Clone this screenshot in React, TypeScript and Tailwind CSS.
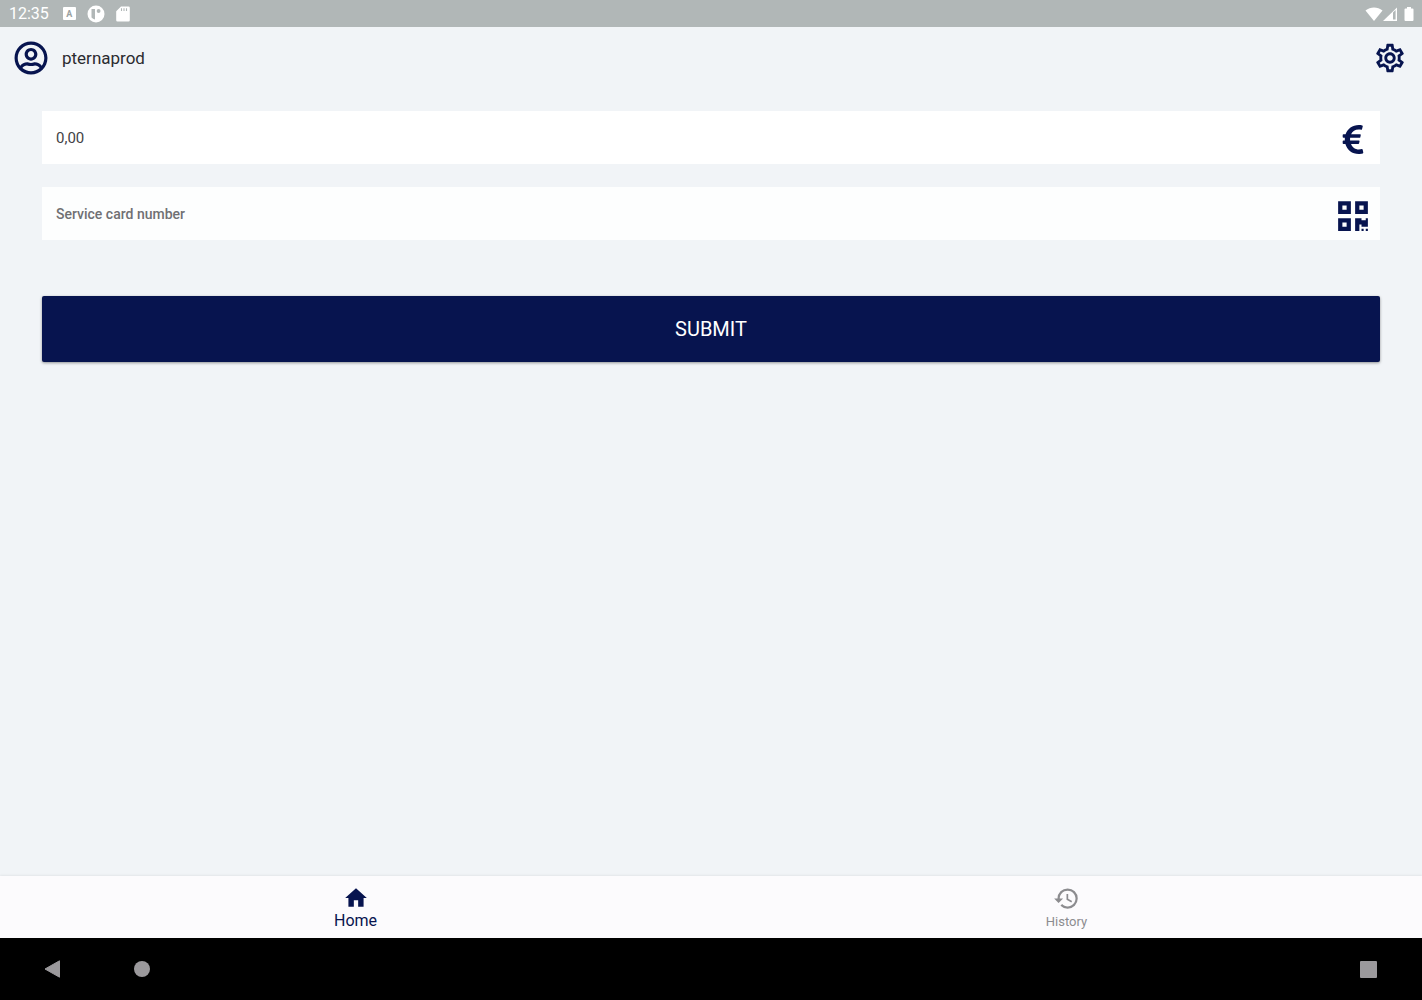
import { useState } from "react";
import type { FormEvent, ReactNode } from "react";
import { FaEuroSign, FaQrcode, FaRegUserCircle } from "react-icons/fa";
import { MdHistory, MdHome, MdOutlineSettings } from "react-icons/md";

type Tab = "home" | "history";

function StatusBar() {
  return (
    <div className="flex h-[27px] shrink-0 items-center bg-[#b1b7b7] pl-[9px] pr-2 text-white">
      <span className="text-base leading-5">12:35</span>

      {/* Notifications */}
      <div className="ml-[14px] flex items-center gap-[11px]">
        <span className="flex size-[13px] items-center justify-center rounded-[1px] bg-white text-[9px] font-bold leading-3 text-[#9aa1a1]">
          A
        </span>
        <svg viewBox="0 0 18 18" className="size-[18px]" aria-hidden="true">
          <circle cx="9" cy="9" r="8.5" fill="#fff" />
          <path d="M4.500 4h3.500v10.500a6 6 0 0 1-3.500-2z" fill="#b1b7b7" />
          <circle cx="11.600" cy="6" r="1.900" fill="#b1b7b7" />
        </svg>
        <svg viewBox="0 0 14 16" className="h-4 w-[14px]" aria-hidden="true">
          <path d="M5 0.500h7.500a1.300 1.300 0 0 1 1.300 1.300v12.400a1.300 1.300 0 0 1-1.300 1.300h-11a1.300 1.300 0 0 1-1.300-1.300V5.300z" fill="#fff" />
          <path d="M5.500 2.200v2.800M8 2.200v2.800M10.500 2.200v2.800" stroke="#b1b7b7" strokeWidth="1.100" />
        </svg>
      </div>

      {/* Wifi, signal and battery */}
      <div className="ml-auto flex items-center">
        <svg viewBox="0 0 18 14" className="h-[14px] w-[18px]" fill="#fff" aria-hidden="true">
          <path d="M9 14 0.500 3.600C3 1.500 6 0.500 9 0.500s6 1 8.500 3.100z" />
        </svg>
        <svg viewBox="0 0 14 14" className="size-[14px]" aria-hidden="true">
          <path d="M0 14 14 0.500V14z" fill="#fff" />
          <path d="M10 5.500 12.600 3v9.600H10z" fill="#b1b7b7" />
        </svg>
        <svg viewBox="0 0 10 14" className="ml-[7px] h-[14px] w-[10px]" fill="#fff" aria-hidden="true">
          <path d="M3 0h4v1.500h1.500a1 1 0 0 1 1 1V13a1 1 0 0 1-1 1h-7a1 1 0 0 1-1-1V2.500a1 1 0 0 1 1-1H3z" />
        </svg>
      </div>
    </div>
  );
}

interface TabButtonProps {
  active: boolean;
  label: string;
  icon: ReactNode;
  onClick: () => void;
}

function TabButton({ active, label, icon, onClick }: TabButtonProps) {
  return (
    <button
      type="button"
      onClick={onClick}
      aria-current={active ? "page" : undefined}
      className={
        active
          ? "flex flex-1 cursor-pointer flex-col items-center pt-[9px] text-base leading-5 text-[#07144f]"
          : "flex flex-1 cursor-pointer flex-col items-center pt-[9px] text-[13px] leading-5 text-[#8c8c8f]"
      }
    >
      {icon}
      {label}
    </button>
  );
}

export default function App() {
  const [amount, setAmount] = useState("0,00");
  const [cardNumber, setCardNumber] = useState("");
  const [tab, setTab] = useState<Tab>("home");

  const handleSubmit = (e: FormEvent) => {
    e.preventDefault();
  };

  return (
    <div className="flex min-h-screen flex-col bg-[#f1f4f7] font-['Roboto',sans-serif]">
      <StatusBar />

      <header className="flex h-[62px] shrink-0 items-center pl-[14px] pr-[15px] text-[#07144f]">
        <FaRegUserCircle className="size-[34px]" />
        <span className="ml-[14px] text-[17px] leading-6 text-[#2b2b30]">pternaprod</span>
        <button type="button" aria-label="Settings" className="ml-auto cursor-pointer">
          <MdOutlineSettings className="size-[34px]" />
        </button>
      </header>

      <main className="flex-1 px-[42px] pt-[22px]">
        <form onSubmit={handleSubmit} className="flex flex-col">
          <label className="flex h-[53px] items-center bg-white pr-3 text-[#07144f]">
            <input
              type="text"
              inputMode="decimal"
              aria-label="Amount"
              value={amount}
              onChange={(e) => setAmount(e.target.value)}
              className="h-full min-w-0 flex-1 bg-transparent px-[14px] text-[15px] text-[#424246] outline-none"
            />
            <FaEuroSign className="mt-1 h-[33px] w-[30px]" />
          </label>

          <div className="mt-[23px] flex h-[53px] items-center bg-[#fdfefe] pr-3 text-[#07144f]">
            <input
              type="text"
              aria-label="Service card number"
              placeholder="Service card number"
              value={cardNumber}
              onChange={(e) => setCardNumber(e.target.value)}
              className="h-full min-w-0 flex-1 bg-transparent px-[14px] text-[14px] font-medium text-[#424246] outline-none placeholder:text-[#707073]"
            />
            <button type="button" aria-label="Scan QR code" className="mt-1 cursor-pointer">
              <FaQrcode className="h-[34px] w-[30px]" />
            </button>
          </div>

          <button
            type="submit"
            className="mt-14 h-[66px] cursor-pointer rounded-xs bg-[#07144f] text-xl text-white shadow-[0_1px_3px_rgba(0,0,0,0.4)]"
          >
            SUBMIT
          </button>
        </form>
      </main>

      <nav className="flex h-[62px] shrink-0 bg-[#fcfbfd] shadow-[0_-1px_2px_rgba(0,0,0,0.06)]">
        <TabButton
          active={tab === "home"}
          label="Home"
          icon={<MdHome className="size-[26px]" />}
          onClick={() => setTab("home")}
        />
        <TabButton
          active={tab === "history"}
          label="History"
          icon={<MdHistory className="size-[27px]" />}
          onClick={() => setTab("history")}
        />
      </nav>

      {/* System navigation */}
      <div className="flex h-[62px] shrink-0 items-center bg-black pl-11 pr-[45px] text-[#9b999c]">
        <button type="button" aria-label="Back" className="cursor-pointer">
          <svg viewBox="0 0 17 18" className="h-[18px] w-[17px]" fill="currentColor" stroke="currentColor" strokeLinejoin="round" aria-hidden="true">
            <path d="M1 9 15.500 0.800v16.400z" />
          </svg>
        </button>
        <button type="button" aria-label="Home screen" className="ml-[73px] size-4 cursor-pointer rounded-full bg-[#9b999c]" />
        <button type="button" aria-label="Recent apps" className="ml-auto size-[17px] cursor-pointer rounded-[1px] bg-[#9b999c]" />
      </div>
    </div>
  );
}
